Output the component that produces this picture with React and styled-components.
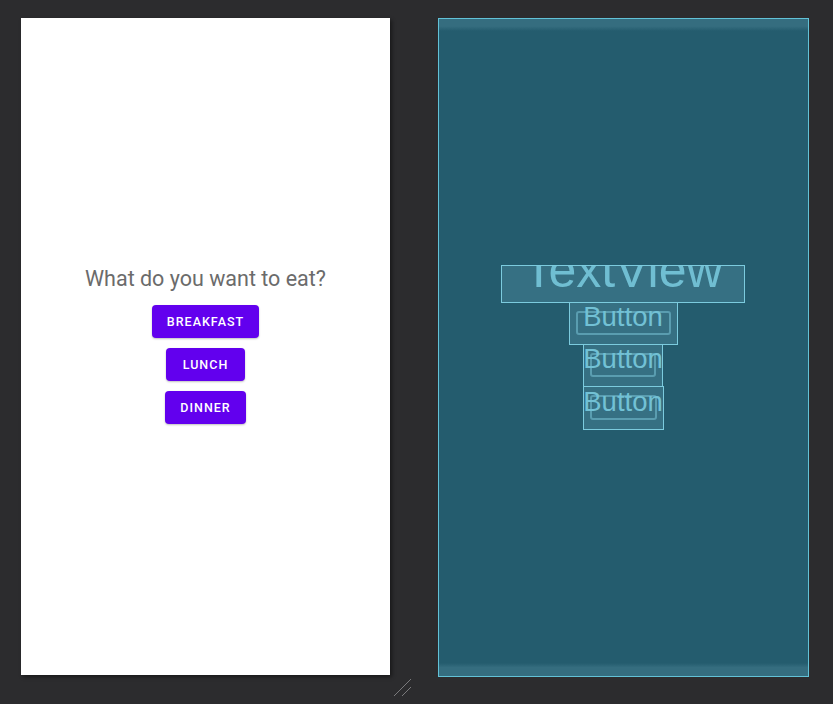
import React from 'react';
import styled, { createGlobalStyle } from 'styled-components';

const GlobalStyle = createGlobalStyle`
  html, body {
    margin: 0;
    padding: 0;
    background: #2c2c2e;
  }
  * {
    box-sizing: border-box;
  }
`;

const meals = ['Breakfast', 'Lunch', 'Dinner'];
const blueprintButtons = [
  { width: 109, height: 43 },
  { width: 80, height: 43 },
  { width: 81, height: 44 },
];

const App = () => {
  return (
    <Canvas>
      <GlobalStyle />

      <DesignPanel>
        <Group>
          <Title>What do you want to eat?</Title>
          {meals.map((meal) => (
            <ButtonSlot key={meal}>
              <MealButton>{meal}</MealButton>
            </ButtonSlot>
          ))}
        </Group>
      </DesignPanel>

      <BlueprintPanel>
        <StatusStrip />
        <BlueprintBody>
          <Group>
            <TextViewBox>
              <TextViewLabel>TextView</TextViewLabel>
            </TextViewBox>
            {blueprintButtons.map((b, i) => (
              <ButtonBox key={i} $w={b.width} $h={b.height}>
                <ButtonOutline>
                  <ButtonLabel>Button</ButtonLabel>
                </ButtonOutline>
              </ButtonBox>
            ))}
          </Group>
        </BlueprintBody>
        <NavStrip />
      </BlueprintPanel>

      <ResizeHandle width="20" height="20" viewBox="0 0 20 20">
        <line x1="1" y1="18" x2="18" y2="1" stroke="#7a7a7c" strokeWidth="1" />
        <line x1="9" y1="18" x2="18" y2="9" stroke="#7a7a7c" strokeWidth="1" />
      </ResizeHandle>
    </Canvas>
  );
};

const Canvas = styled.div`
  position: relative;
  width: 833px;
  height: 704px;
  background: #2c2c2e;
  display: flex;
  align-items: flex-start;
  gap: 48px;
  padding: 18px 0 0 21px;
  overflow: hidden;
`;

const DesignPanel = styled.div`
  width: 369px;
  height: 657px;
  background: #ffffff;
  box-shadow: 2px 2px 4px rgba(0, 0, 0, 0.45);
  display: flex;
  align-items: center;
  justify-content: center;
  padding-top: 1px;
`;

const Group = styled.div`
  display: flex;
  flex-direction: column;
  align-items: center;
`;

const Title = styled.div`
  height: 38px;
  padding-bottom: 8px;
  font-family: Roboto, 'Liberation Sans', sans-serif;
  font-size: 21.5px;
  line-height: 30px;
  color: #6b6b6b;
  white-space: nowrap;
`;

const ButtonSlot = styled.div`
  height: 43px;
  padding-top: 3.5px;
  display: flex;
  justify-content: center;
`;

const MealButton = styled.button`
  height: 32.5px;
  min-width: 79px;
  padding: 0 15px;
  border: none;
  border-radius: 4px;
  background: #6200ee;
  color: #ffffff;
  font-family: Roboto, 'Liberation Sans', sans-serif;
  font-weight: 500;
  font-size: 12.5px;
  letter-spacing: 1px;
  text-transform: uppercase;
  box-shadow: 0 1px 2px rgba(0, 0, 0, 0.25);
  display: flex;
  align-items: center;
  justify-content: center;
`;

const BlueprintPanel = styled.div`
  width: 371px;
  height: 659px;
  background: #245c6e;
  border: 1px solid #62c2d7;
  display: flex;
  flex-direction: column;
`;

const StatusStrip = styled.div`
  height: 12px;
  background: linear-gradient(#356d7f 0%, #356d7f 60%, #245c6e 100%);
`;

const NavStrip = styled.div`
  height: 13px;
  background: linear-gradient(#245c6e 0%, #356d7f 35%, #356d7f 100%);
`;

const BlueprintBody = styled.div`
  flex: 1;
  display: flex;
  align-items: center;
  justify-content: center;
  padding-right: 1px;
  padding-top: 1px;
`;

const TextViewBox = styled.div`
  width: 244px;
  height: 38px;
  border: 1px solid #7ccbde;
  background: #367083;
  overflow: hidden;
  display: flex;
  justify-content: center;
`;

const TextViewLabel = styled.div`
  margin-top: -20px;
  font-family: 'Liberation Sans', Arial, sans-serif;
  font-size: 50px;
  line-height: 48px;
  color: #70bed2;
  white-space: nowrap;
`;

const ButtonBox = styled.div`
  width: ${(p) => p.$w}px;
  height: ${(p) => p.$h}px;
  margin-top: -1px;
  border: 1px solid #7ccbde;
  background: #367083;
  overflow: hidden;
  display: flex;
  padding: 8px 6px 9px 6px;
`;

const ButtonOutline = styled.div`
  flex: 1;
  min-width: 0;
  border: 2px solid #5a9db0;
  border-radius: 3px;
  display: flex;
  align-items: center;
  justify-content: center;
`;

const ButtonLabel = styled.div`
  flex-shrink: 0;
  margin-bottom: 12px;
  font-family: 'Liberation Sans', Arial, sans-serif;
  font-size: 27.5px;
  line-height: 30px;
  color: #72c1d5;
  white-space: nowrap;
`;

const ResizeHandle = styled.svg`
  position: absolute;
  left: 393px;
  top: 678px;
`;

export default App;
